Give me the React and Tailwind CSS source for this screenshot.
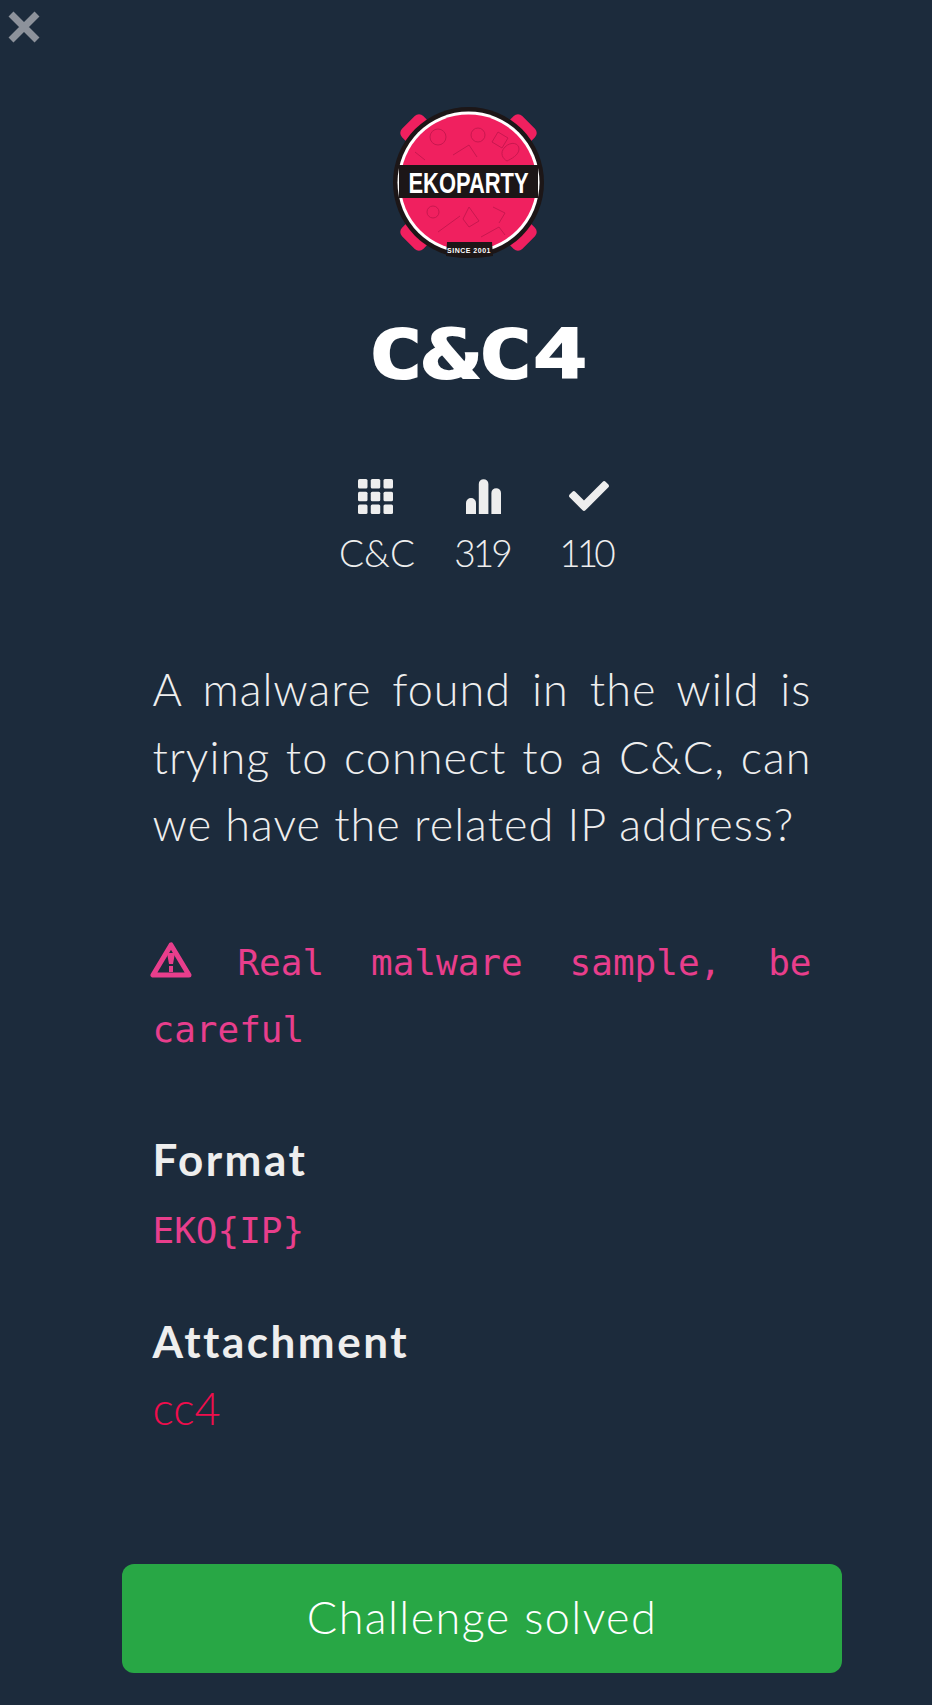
import React from "react"
import { FaCheck } from "react-icons/fa"

const sans = "font-['Lato','Open_Sans',sans-serif]"
const mono = "font-['DejaVu_Sans_Mono',monospace]"

function Logo() {
  return (
    <svg width="151" height="151" viewBox="0 0 151 151" className="block">
      {[45, 135, 225, 315].map((a) => (
        <rect key={a} x="60.5" y="-9.5" width="30" height="32" rx="6" fill="#f0205f" transform={`rotate(${a} 75.5 75.5)`} />
      ))}
      <circle cx="75.5" cy="75.5" r="75.5" fill="#1c1617" />
      <circle cx="75.5" cy="75.5" r="71" fill="#ffffff" />
      <circle cx="75.5" cy="75.5" r="68" fill="#f0205f" />
      <g fill="none" stroke="#c9174f" strokeWidth="1">
        <circle cx="45" cy="30" r="8" />
        <circle cx="85" cy="28" r="7" />
        <path d="M105 25l10 6-6 10-10-6z" />
        <path d="M22 45l10 8M60 48l16-10 8 12" />
        <path d="M112 40c6-6 14-4 14 2 0 6-8 10-12 12-4-2-8-8-2-14z" />
        <circle cx="40" cy="105" r="6" />
        <path d="M76 100l10 14-10 6-6-8zM100 100l12 6-6 10" />
        <path d="M45 125l22-16M88 130l18-10 6 8" />
      </g>
      <rect x="6" y="58" width="139" height="33" fill="#1c1617" />
      <text x="75.5" y="86" textAnchor="middle" fill="#fff" fontFamily="Liberation Sans" fontWeight="700" fontSize="29" textLength="120" lengthAdjust="spacingAndGlyphs">EKOPARTY</text>
      <path d="M54 135h45l1 14q-23 4-47 0z" fill="#1c1617" />
      <text x="76" y="146" textAnchor="middle" fill="#fff" fontFamily="Liberation Sans" fontWeight="700" fontSize="7" letterSpacing=".5">SINCE 2001</text>
    </svg>
  )
}

function GridIcon() {
  const pos = [0, 12.75, 25.5]
  return (
    <svg width="35" height="35" viewBox="0 0 35 35" fill="currentColor">
      {pos.map((y) => pos.map((x) => <rect key={`${x}-${y}`} x={x} y={y} width="9.5" height="9.5" rx="1.5" />))}
    </svg>
  )
}

function BarsIcon() {
  return (
    <svg width="35" height="35" viewBox="0 0 35 35" fill="currentColor">
      <path d="M0 35V24a5 5 0 0 1 10 0v11zM12.8 35V5a4.8 4.8 0 0 1 9.6 0v30zM25.4 35V14a4.8 4.8 0 0 1 9.6 0v21z" />
    </svg>
  )
}

function Stat({ icon, label, iconClass, className }) {
  return (
    <div className="flex flex-col items-center">
      <div className={`h-[44px] flex items-center justify-center text-[#eeeeee] ${iconClass}`}>{icon}</div>
      <div className={`font-light text-[37px] leading-[54px] text-[#eeeeee] mt-[8px] ${className}`}>{label}</div>
    </div>
  )
}

export default function App() {
  return (
    <div className={`${sans} relative w-[932px] h-[1705px] bg-[#1c2b3c] pl-[122px]`}>
      <svg width="40" height="40" viewBox="0 0 40 40" className="absolute left-[4px] top-[7px]">
        <path d="M7 7L33 33M33 7L7 33" stroke="#8d929b" strokeWidth="7" />
      </svg>

      <div className="w-[720px] flex flex-col items-center">
        <div className="mt-[107px] -ml-[28px]">
          <Logo />
        </div>

        <h1 className={`${mono} mt-[61px] text-[67px] leading-[72px] font-bold text-white -ml-[8px] scale-x-[1.36] [-webkit-text-stroke:2px_white]`}>C&amp;C4</h1>

        <div className="mt-[83px] grid grid-cols-3 w-[315px] justify-items-center">
          <Stat icon={<GridIcon />} label="C&C" iconClass="-ml-[4px]" className="" />
          <Stat icon={<BarsIcon />} label="319" iconClass="ml-[4px]" className="tracking-[-3px]" />
          <Stat icon={<FaCheck className="w-[40px] h-[40px]" />} label="110" iconClass="ml-[4px]" className="tracking-[-4px] -ml-[3px]" />
        </div>

        <div className="mt-[76px] w-[659px]">
          <p className="font-light text-[45px] leading-[67.5px] tracking-[1px] text-[#eeeeee] text-justify">
            A malware found in the wild is trying to connect to a C&amp;C, can we have the related IP address?
          </p>

          <p className={`${mono} mt-[70px] text-[36px] leading-[67.5px] text-[#e83e8c] text-justify`}>
            <svg width="44" height="38" viewBox="0 0 44 38" className="inline-block align-[-3px] -ml-[4px] -mr-[2px]">
              <path d="M22 5L4 35h36z" fill="none" stroke="#e83e8c" strokeWidth="5" strokeLinejoin="round" />
              <path d="M18 13h8l-2 11h-4zM20 26h4v6h-4z" fill="#e83e8c" />
            </svg>
            {" "}Real malware sample, be careful
          </p>

          <h2 className="mt-[62px] font-bold text-[44px] leading-[67px] tracking-[2.5px] text-[#eeeeee]">Format</h2>
          <div className={`${mono} mt-[4px] text-[36px] leading-[67px] text-[#e83e8c]`}>EKO&#123;IP&#125;</div>

          <h2 className="mt-[44px] font-bold text-[44px] leading-[67px] tracking-[2.5px] text-[#eeeeee]">Attachment</h2>
          <div className="font-light text-[45px] leading-[67px] text-[#f00d4d]">cc4</div>
        </div>

        <button className="mt-[122px] w-[720px] h-[109px] rounded-[12px] bg-[#28a745] text-white font-light text-[45px] tracking-[1.4px]">
          Challenge solved
        </button>
      </div>
    </div>
  )
}
